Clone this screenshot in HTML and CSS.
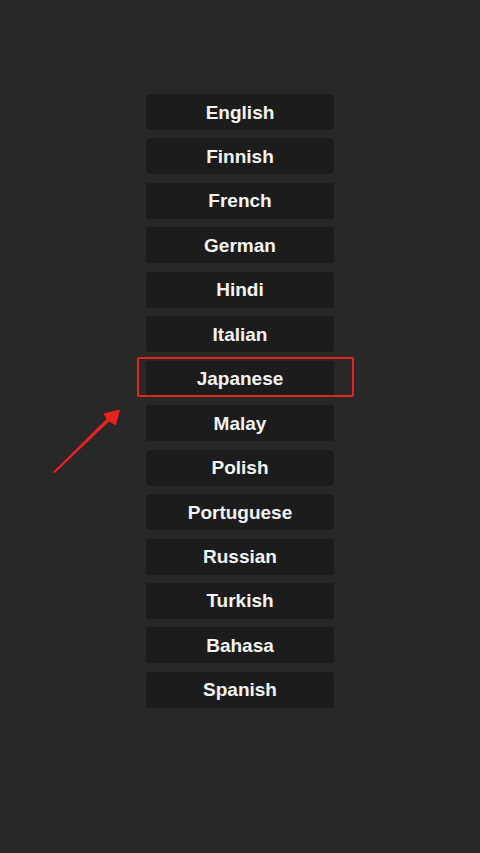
FILE: index.html
```html
<!DOCTYPE html>
<html>
<head>
<meta charset="utf-8">
<link rel="stylesheet" href="styles.css">
</head>
<body>
<div class="screen">
  <ul class="langs">
    <li class="lang">English</li>
    <li class="lang">Finnish</li>
    <li class="lang">French</li>
    <li class="lang">German</li>
    <li class="lang">Hindi</li>
    <li class="lang">Italian</li>
    <li class="lang selected">Japanese</li>
    <li class="lang">Malay</li>
    <li class="lang">Polish</li>
    <li class="lang">Portuguese</li>
    <li class="lang">Russian</li>
    <li class="lang">Turkish</li>
    <li class="lang">Bahasa</li>
    <li class="lang">Spanish</li>
  </ul>
  <svg class="arrow" width="480" height="853" viewBox="0 0 480 853">
    <polygon points="53,472 54.5,473.2 109,421.5 116,425.5 120,409.5 103.5,413.5 106.5,419" fill="#e8231d"/>
  </svg>
</div>
</body>
</html>
```
FILE: styles.css
```css
html, body {
  margin: 0;
  padding: 0;
  background: #282828;
}
.screen {
  position: relative;
  width: 480px;
  height: 853px;
  background: #282828;
  font-family: "Liberation Sans", Arial, sans-serif;
}
.langs {
  list-style: none;
  margin: 0;
  padding: 94px 0 0 0;
  display: flex;
  flex-direction: column;
  align-items: center;
  gap: 8.46px;
}
.lang {
  position: relative;
  width: 188px;
  height: 36px;
  box-sizing: border-box;
  background: #1c1c1c;
  border-radius: 3px;
  color: #f4f4f4;
  font-weight: bold;
  font-size: 19px;
  padding-top: 1px;
  display: flex;
  align-items: center;
  justify-content: center;
}
.selected::after {
  content: "";
  position: absolute;
  left: -9px;
  right: -20px;
  top: -3.5px;
  bottom: -0.5px;
  border: 2px solid #e0261f;
  border-radius: 2px;
}
.arrow {
  position: absolute;
  left: 0;
  top: 0;
  pointer-events: none;
}
```
